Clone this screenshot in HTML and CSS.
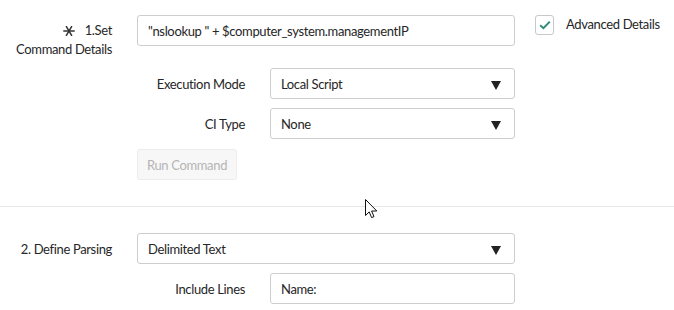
FILE: index.html
```html
<!DOCTYPE html>
<html lang="en">
<head>
  <meta charset="UTF-8" />
  <meta name="viewport" content="width=device-width, initial-scale=1.0"/>
  <title>Command Details</title>
  <link rel="stylesheet" href="styles.css">
</head>
<body>

  <div class="form">
    <div class="section first">
      <div class="label main">
        <span class="req">
          <svg width="12" height="10" viewBox="0 0 12 10">
            <g stroke="#333" stroke-width="1.5" stroke-linecap="round">
              <line x1="0.8" y1="5" x2="11.2" y2="5"/>
              <line x1="3.4" y1="0.6" x2="8.6" y2="9.4"/>
              <line x1="8.6" y1="0.6" x2="3.4" y2="9.4"/>
            </g>
          </svg>
        </span>1.Set<br>Command Details
      </div>
      <div class="field">"nslookup " + $computer_system.managementIP</div>
      <div class="side">
        <span class="checkbox">
          <svg width="12" height="10" viewBox="0 0 12 10">
            <path d="M1.2 5.2 L4.4 8.2 L10.8 1.6" fill="none" stroke="#2f8a78" stroke-width="2"/>
          </svg>
        </span>
        <span class="side-text">Advanced Details</span>
      </div>

      <div class="sub">
        <div class="label">Execution Mode</div>
        <div class="field select">Local Script<span class="arrow"></span></div>
        <div class="label">CI Type</div>
        <div class="field select">None<span class="arrow"></span></div>
        <button class="run" disabled>Run Command</button>
      </div>
    </div>

    <div class="section last">
      <div class="label">2. Define Parsing</div>
      <div class="field select">Delimited Text<span class="arrow"></span></div>
      <div></div>
      <div class="sub">
        <div class="label">Include Lines</div>
        <div class="field">Name:</div>
      </div>
    </div>
  </div>

  <svg class="cursor" width="13" height="21" viewBox="0 0 13 21">
    <path d="M0.5 0.5 L0.5 16.5 L4.2 12.9 L6.6 18.6 L9 17.6 L6.6 12 L11.8 12 Z" fill="#fff" stroke="#111" stroke-width="1"/>
  </svg>

</body>
</html>
```

FILE: styles.css
```css
body {
  margin: 0;
  font-family: Lato, "Open Sans", sans-serif;
  font-size: 13px;
  letter-spacing: -0.35px;
  color: #262626;
  background: #fff;
  overflow: hidden;
}
.section {
  display: grid;
  grid-template-columns: 112px 378px 1fr;
  column-gap: 25px;
  row-gap: 10px;
  padding: 15px 0 26px;
}
.section.last {
  border-top: 1px solid #e6e6e6;
  padding: 26px 0 6px;
  row-gap: 9px;
}
.label {
  text-align: right;
  line-height: 18px;
  align-self: center;
}
.label.main {
  align-self: start;
  padding-top: 6px;
}
.req {
  display: inline-block;
  margin-right: 10px;
  vertical-align: -1px;
}
.field {
  height: 31px;
  box-sizing: border-box;
  border: 1px solid #cdcdcd;
  border-radius: 3px;
  padding: 0 10px;
  display: flex;
  align-items: center;
  position: relative;
}
.select .arrow {
  position: absolute;
  right: 13px;
  top: 12px;
  width: 0;
  height: 0;
  border-left: 5px solid transparent;
  border-right: 5px solid transparent;
  border-top: 9px solid #222;
}
.side {
  display: flex;
  align-items: center;
  gap: 12px;
  margin-left: -5px;
  align-self: start;
}
.checkbox {
  width: 19px;
  height: 20px;
  box-sizing: border-box;
  border: 1px solid #c8c8c8;
  border-radius: 3px;
  display: flex;
  align-items: center;
  justify-content: center;
}
.side-text {
  margin-top: -2px;
}
.sub {
  grid-column: 2;
  display: grid;
  grid-template-columns: 108px 245px;
  column-gap: 25px;
  row-gap: 9px;
}
.run {
  width: 100px;
  height: 31px;
  margin-top: 1px;
  font: inherit;
  letter-spacing: inherit;
  color: #b5b5b5;
  background: #f7f7f7;
  border: 1px solid #ececec;
  border-radius: 3px;
}
.cursor {
  position: absolute;
  left: 365px;
  top: 199px;
}
```
